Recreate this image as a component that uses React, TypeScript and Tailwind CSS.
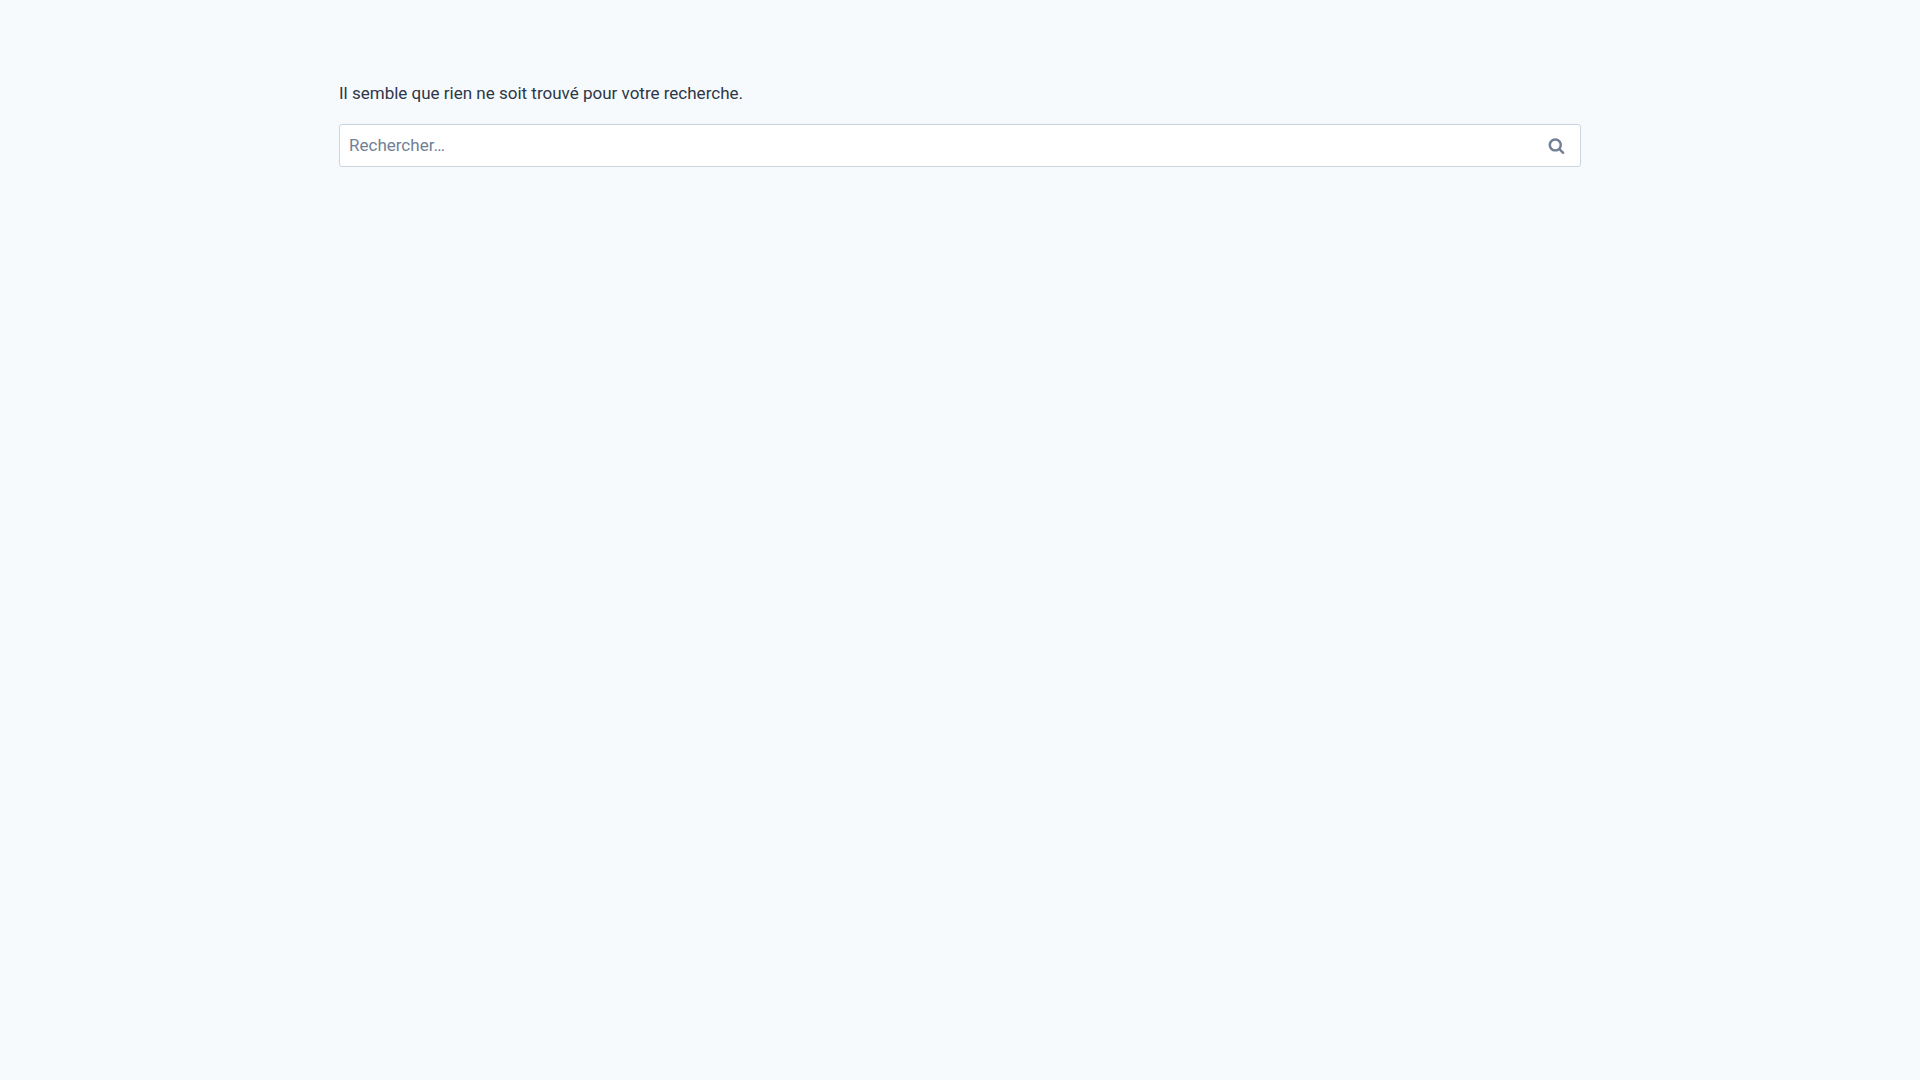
import React from "react";

function App() {
  return (
    <div className="min-h-screen bg-[#f7fafc] font-[Roboto,sans-serif] text-[17px] leading-[27px] text-[#2d3748]">
      <main className="mx-auto max-w-[1290px] px-6 py-20">
        <p className="mb-[17px]">
          Il semble que rien ne soit trouvé pour votre recherche.
        </p>
        <form
          role="search"
          className="relative"
          onSubmit={(e) => e.preventDefault()}
        >
          <input
            type="search"
            aria-label="Rechercher"
            placeholder="Rechercher…"
            className="block h-[43px] w-full rounded-[3px] border border-[#cbd5e0] bg-white pr-[60px] pb-0.5 pl-[9px] placeholder:text-[#718096]"
          />
          <button
            type="submit"
            aria-label="Rechercher"
            className="absolute inset-y-0 right-0 flex w-[50px] items-center justify-center text-[#718096]"
          >
            <svg
              className="h-[17px] w-[17px]"
              fill="currentColor"
              viewBox="0 0 26 28"
              aria-hidden="true"
            >
              <path d="M18 13c0-3.859-3.141-7-7-7s-7 3.141-7 7 3.141 7 7 7 7-3.141 7-7zM26 26c0 1.094-0.906 2-2 2-0.531 0-1.047-0.219-1.406-0.594l-5.359-5.344c-1.828 1.266-4.016 1.937-6.234 1.937-6.078 0-11-4.922-11-11s4.922-11 11-11 11 4.922 11 11c0 2.219-0.672 4.406-1.937 6.234l5.359 5.359c0.359 0.359 0.578 0.875 0.578 1.406z" />
            </svg>
          </button>
        </form>
      </main>
    </div>
  );
}

export default App;
